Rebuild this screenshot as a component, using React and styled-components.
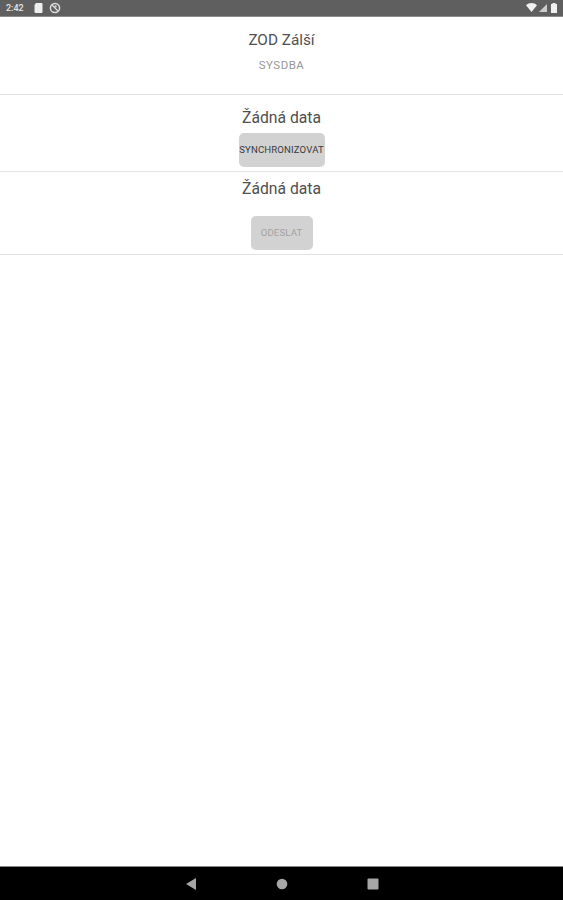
import React from "react";
import styled, { createGlobalStyle } from "styled-components";

const Global = createGlobalStyle`
  html, body { margin: 0; padding: 0; background: #fff; }
  #root { height: 900px; }
`;
const Screen = styled.div`
  width: 563px; height: 900px; display: flex; flex-direction: column;
  font-family: Roboto, "Liberation Sans", sans-serif; background: #fff; overflow: hidden;
`;
const StatusBar = styled.div`
  height: 17px; flex: none; background: #5f5f5f; display: flex; align-items: center;
  justify-content: space-between; padding: 0 6px 1px 6px; box-sizing: border-box;
  border-bottom: 1px solid #8a8a8a;
`;
const StatusGroup = styled.div`
  display: flex; align-items: center; gap: ${p => p.$gap}px;
`;
const Clock = styled.span`
  font-size: 9px; font-weight: 500; color: #e6e6e6; width: 21px; margin-right: 1px;
`;
const Content = styled.main`
  flex: 1; display: flex; flex-direction: column;
`;
const Section = styled.section`
  height: ${p => p.$h}px; box-sizing: border-box; border-bottom: 1px solid #e2e2e2;
  display: flex; flex-direction: column; align-items: center; padding-top: ${p => p.$pt}px;
`;
const Title = styled.div`
  font-size: ${p => p.$size}px; line-height: 20px; color: #4f4f4f; white-space: nowrap;
`;
const Sub = styled.div`
  font-size: 11.5px; line-height: 14px; color: #979797; margin-top: 8px; letter-spacing: 0.5px;
`;
const ActionButton = styled.div`
  height: ${p => p.$h}px; width: ${p => p.$w}px; margin-top: ${p => p.$mt}px; border-radius: 5px;
  background: #d2d2d2; color: ${p => p.$muted ? "#a2a2a2" : "#3a3a3a"};
  font-size: 9.6px; font-weight: 400; display: flex; align-items: center; justify-content: center;
  white-space: nowrap; letter-spacing: 0.15px; box-sizing: border-box; padding-bottom: 1px;
`;
const NavBar = styled.div`
  height: 33px; flex: none; background: #000; border-top: 1px solid #888;
  display: flex; align-items: center; justify-content: center; gap: 79px;
`;
const Icon = styled.svg`
  display: block; flex: none;
`;

export default function App() {
  return (
    <Screen>
      <Global />
      <StatusBar>
        <StatusGroup $gap={6}>
          <Clock>2:42</Clock>
          <Icon width="9" height="10" viewBox="0 0 9 10"><path d="M2 0h5.5a1 1 0 0 1 1 1v8a1 1 0 0 1-1 1h-6a1 1 0 0 1-1-1V2z" fill="#eee" /></Icon>
          <Icon width="12" height="12" viewBox="0 0 12 12"><circle cx="6" cy="6" r="4.6" fill="none" stroke="#dcdcdc" strokeWidth="1.5" /><path d="M3 3l6 6" stroke="#dcdcdc" strokeWidth="1.3" /><circle cx="6.5" cy="4.5" r="1.2" fill="#ccc" /></Icon>
        </StatusGroup>
        <StatusGroup $gap={2}>
          <Icon width="11" height="9" viewBox="0 0 11 9"><path d="M0 2.2C3 -.6 8 -.6 11 2.2L5.5 9z" fill="#f0f0f0" /></Icon>
          <Icon width="8" height="8" viewBox="0 0 8 8"><path d="M8 0v8H0z" fill="#ccc" /></Icon>
          <Icon width="6" height="10" viewBox="0 0 6 10" style={{ marginLeft: 2 }}><path d="M1.5 1V0h3v1H6v9H0V1z" fill="#f0f0f0" /></Icon>
        </StatusGroup>
      </StatusBar>
      <Content>
        <Section $h={78} $pt={13}>
          <Title $size={15.3}>ZOD Zálší</Title>
          <Sub>SYSDBA</Sub>
        </Section>
        <Section $h={77} $pt={13}>
          <Title $size={15.7}>Žádná data</Title>
          <ActionButton $w={86} $h={34} $mt={5}>SYNCHRONIZOVAT</ActionButton>
        </Section>
        <Section $h={83} $pt={7}>
          <Title $size={15.7}>Žádná data</Title>
          <ActionButton $w={62} $h={34} $mt={17} $muted>ODESLAT</ActionButton>
        </Section>
      </Content>
      <NavBar>
        <Icon width="12" height="12" viewBox="0 0 12 12"><path d="M11 0v12L1 6z" fill="#a6a6a6" /></Icon>
        <Icon width="12" height="12" viewBox="0 0 12 12"><circle cx="6" cy="6" r="5.3" fill="#a6a6a6" /></Icon>
        <Icon width="12" height="12" viewBox="0 0 12 12"><rect x="0.5" y="0.5" width="11" height="11" rx="1" fill="#a6a6a6" /></Icon>
      </NavBar>
    </Screen>
  );
}
